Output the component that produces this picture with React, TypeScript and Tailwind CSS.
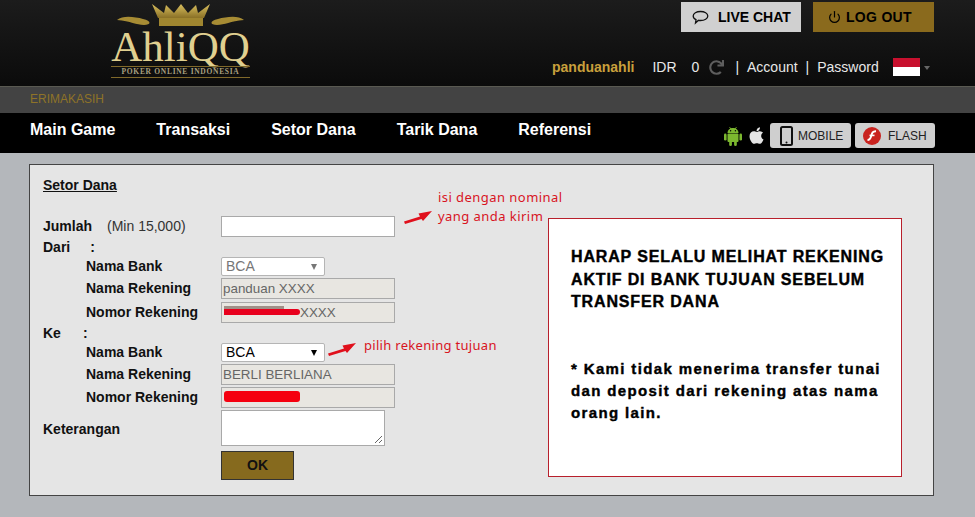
import { Power } from "lucide-react";
import { FaApple, FaRedo } from "react-icons/fa";

const sans = "font-['Liberation_Sans',Arial,sans-serif]";

// Crown and scrolls from the logo
function LogoMark() {
  return (
    <svg width="139" height="25" viewBox="0 0 139 25" className="block">
      <defs>
        <linearGradient id="gold" x1="0" y1="0" x2="0" y2="1">
          <stop offset="0" stopColor="#d9bf5e" />
          <stop offset="1" stopColor="#8a7026" />
        </linearGradient>
      </defs>
      <path
        d="M41 0 L53 9 L55 1 L63 9 L70 0 L77 9 L85 1 L87 9 L99 0 L93 14 L47 14 Z"
        fill="url(#gold)"
      />
      <rect x="48" y="14" width="44" height="8" fill="#a08630" />
      <path d="M6 16 C12 11 24 13 32 15 C41 17 40 21 33 21 C25 21 20 17 6 16 Z" fill="#a78c34" />
      <path d="M133 16 C127 11 115 13 107 15 C98 17 99 21 106 21 C114 21 119 17 133 16 Z" fill="#a78c34" />
    </svg>
  );
}

function Header() {
  return (
    <header className="flex h-[87px] justify-between border-b border-[#5a5a52] bg-gradient-to-b from-[#1c1c1c] to-[#0b0b0b]">
      <div className="ml-[111px] flex w-[139px] flex-col items-center pt-[4px]">
        <LogoMark />
        <div className="h-[36px] font-['Liberation_Serif',serif] text-[43px] leading-[36px] text-[#e0d090]">
          AhliQQ
        </div>
        <div className="mt-[1px] w-full border-y border-[#80692a] text-center font-['Liberation_Serif',serif] text-[7.5px] leading-[10px] font-bold tracking-[0.7px] whitespace-nowrap text-[#a8a080]">
          POKER ONLINE INDONESIA
        </div>
      </div>

      <div className={`flex w-[423px] flex-col ${sans}`}>
        <div className="mt-[2px] flex justify-end gap-[12px] pr-[41px]">
          <button className="flex h-[30px] w-[120px] items-center gap-[9px] bg-[#d0d0d0] pl-[11px] text-[14px] font-bold text-black">
            <svg width="17" height="15" viewBox="0 0 17 15">
              <path
                d="M8.5 1.5 C12.6 1.5 15.8 3.4 15.8 6 C15.8 8.6 12.6 10.5 8.5 10.5 C7.8 10.5 7.1 10.4 6.5 10.3 L3.5 13 L4 9.6 C2.2 8.8 1.2 7.5 1.2 6 C1.2 3.4 4.4 1.5 8.5 1.5 Z"
                fill="none"
                stroke="#111"
                strokeWidth="1.3"
              />
            </svg>
            LIVE CHAT
          </button>
          <button className="flex h-[30px] w-[121px] items-center gap-[5px] bg-[#8a6a1d] pl-[15px] text-[14px] font-bold tracking-[0.3px] text-black">
            <Power className="h-[14px] w-[13px]" strokeWidth={2.2} />
            LOG OUT
          </button>
        </div>
        <div className="mt-[25px] flex h-[20px] items-center text-[14px] text-[#e8e8e8]">
          <span className="font-bold text-[#c9a03c]">panduanahli</span>
          <span className="ml-[18px]">IDR</span>
          <span className="ml-[15px]">0</span>
          <FaRedo className="ml-[10px] h-[15px] w-[15px] text-[#5e5e5e]" />
          <span className="ml-[11px]">|</span>
          <span className="ml-[8px]">Account</span>
          <span className="ml-[8px]">|</span>
          <span className="ml-[8px]">Password</span>
          <div className="ml-[14px] h-[18px] w-[27px] bg-white">
            <div className="h-[9px] bg-[#c8102e]" />
          </div>
          <div className="mt-[2px] ml-[4px] h-0 w-0 border-x-[3.5px] border-t-[4px] border-x-transparent border-t-[#666]" />
        </div>
      </div>
    </header>
  );
}

function AndroidIcon() {
  return (
    <svg width="20" height="20" viewBox="0 0 20 20" fill="#7cb82f">
      <path d="M4.5 7 C4.7 3.8 7 2 10 2 C13 2 15.3 3.8 15.5 7 Z" />
      <path d="M6.5 1 L8 3.2 M13.5 1 L12 3.2" stroke="#7cb82f" strokeWidth="0.8" />
      <circle cx="7.6" cy="4.7" r="0.7" fill="#000" />
      <circle cx="12.4" cy="4.7" r="0.7" fill="#000" />
      <rect x="4.5" y="7.6" width="11" height="8.4" rx="1" />
      <rect x="1" y="7.6" width="2.6" height="7" rx="1.3" />
      <rect x="16.4" y="7.6" width="2.6" height="7" rx="1.3" />
      <rect x="6.2" y="14" width="2.7" height="6" rx="1.3" />
      <rect x="11.1" y="14" width="2.7" height="6" rx="1.3" />
    </svg>
  );
}

function NavBar() {
  const items = ["Main Game", "Transaksi", "Setor Dana", "Tarik Dana", "Referensi"];
  return (
    <nav className={`flex h-[40px] items-start justify-between bg-black pr-[40px] pl-[30px] ${sans}`}>
      <div className="flex gap-[41px] pt-[7px] text-[16px] leading-[20px] font-bold text-white">
        {items.map((item) => (
          <span key={item}>{item}</span>
        ))}
      </div>
      <div className="flex items-center pt-[10px]">
        <AndroidIcon />
        <FaApple className="ml-[5px] h-[19px] w-[17px] text-[#e4e4e4]" />
        <button className="ml-[5px] flex h-[25px] w-[81px] items-center rounded-[3px] bg-[#cfcfcf] pl-[10px] text-[12px] text-[#222]">
          <svg width="13" height="20" viewBox="0 0 13 20" className="mr-[5px]">
            <rect x="1" y="1" width="11" height="18" rx="1.5" fill="none" stroke="#111" strokeWidth="2" />
            <circle cx="6.5" cy="16.5" r="1" fill="#111" />
          </svg>
          MOBILE
        </button>
        <button className="ml-[4px] flex h-[25px] w-[80px] items-center rounded-[3px] bg-[#cfcfcf] pl-[8px] text-[12px] text-[#222]">
          <svg width="18" height="18" viewBox="0 0 18 18" className="mr-[7px]">
            <circle cx="9" cy="9" r="9" fill="#c9231f" />
            <path
              d="M13 4.2 C9.5 4 9 6.2 8.2 9 C7.6 11.3 6.8 13 4.5 13"
              fill="none"
              stroke="#fff"
              strokeWidth="2"
            />
            <path d="M6.5 8.4 L11.5 8.4" stroke="#fff" strokeWidth="1.6" />
          </svg>
          FLASH
        </button>
      </div>
    </nav>
  );
}

function RedArrow() {
  return (
    <svg width="28" height="13" viewBox="0 0 28 13">
      <path d="M0 10.5 L16 5.5 L14.5 2.5 L28 0 L19 10 L17.5 8 L1 13 Z" fill="#e0101c" />
    </svg>
  );
}

function FieldLabel({ children }: { children: React.ReactNode }) {
  return <div className="w-[135px] pl-[43px] whitespace-nowrap">{children}</div>;
}

function ReadOnlyBox({ value }: { value?: string }) {
  return (
    <div className="h-[21px] w-[174px] border border-[#a9a9a9] bg-[#e8e6e1] pl-[1px] text-[13.4px] leading-[19px] font-normal text-[#666]">
      {value}
    </div>
  );
}

function BankSelect({ muted }: { muted?: boolean }) {
  return (
    <div
      className={`flex h-[19px] w-[104px] items-center justify-between rounded-[2px] border border-[#b5b5b5] bg-white pr-[7px] pl-[4px] text-[14px] font-normal ${
        muted ? "text-[#777]" : "text-black"
      }`}
    >
      BCA
      <div
        className={`h-0 w-0 border-x-[3.5px] border-t-[6px] border-x-transparent ${
          muted ? "border-t-[#777]" : "border-t-black"
        }`}
      />
    </div>
  );
}

function DepositForm() {
  return (
    <div className="w-[505px] text-[14px] font-bold text-[#111]">
      <div className="h-[51px] pt-[12px] leading-[16px] underline">Setor Dana</div>

      <div className="flex h-[21px] items-center">
        <div className="flex w-[178px]">
          <span>Jumlah</span>
          <span className="ml-[15px] font-normal text-[#333]">(Min 15,000)</span>
        </div>
        <div className="h-[21px] w-[174px] border border-[#a9a9a9] bg-white" />
      </div>

      <div className="flex h-[20px] items-center">
        Dari<span className="ml-[20px]">:</span>
      </div>
      <div className="flex h-[19px] items-center">
        <FieldLabel>Nama Bank</FieldLabel>
        <div className="ml-[43px]">
          <BankSelect muted />
        </div>
      </div>
      <div className="mt-[2px] flex h-[21px] items-center">
        <FieldLabel>Nama Rekening</FieldLabel>
        <div className="ml-[43px]">
          <ReadOnlyBox value="panduan XXXX" />
        </div>
      </div>
      <div className="mt-[3px] flex h-[21px] items-center">
        <FieldLabel>Nomor Rekening</FieldLabel>
        <div className="relative ml-[43px]">
          <ReadOnlyBox />
          <span className="absolute top-0 left-[79px] text-[13.4px] leading-[21px] font-normal text-[#666]">XXXX</span>
          <div className="absolute top-[4px] left-[3px] h-[3px] w-[60px] bg-[#a09088]" />
          <div className="absolute top-[7px] left-[3px] h-[6px] w-[76px] rounded-r-full bg-[#e8001c]" />
        </div>
      </div>

      <div className="flex h-[20px] items-center">
        Ke<span className="ml-[22px]">:</span>
      </div>
      <div className="flex h-[19px] items-center">
        <FieldLabel>Nama Bank</FieldLabel>
        <div className="ml-[43px]">
          <BankSelect />
        </div>
      </div>
      <div className="mt-[2px] flex h-[21px] items-center">
        <FieldLabel>Nama Rekening</FieldLabel>
        <div className="ml-[43px]">
          <ReadOnlyBox value="BERLI BERLIANA" />
        </div>
      </div>
      <div className="mt-[2px] flex h-[21px] items-center">
        <FieldLabel>Nomor Rekening</FieldLabel>
        <div className="relative ml-[43px]">
          <ReadOnlyBox />
          <div className="absolute top-[4px] left-[3px] h-[11px] w-[76px] rounded-[3px] bg-[#f5000f]" />
        </div>
      </div>

      <div className="mt-[2px] flex h-[36px] items-center">
        <div className="w-[178px] pt-[2px]">Keterangan</div>
        <div className="relative h-[36px] w-[164px] border border-[#a9a9a9] bg-white">
          <svg width="9" height="9" viewBox="0 0 9 9" className="absolute right-[1px] bottom-[1px]">
            <path d="M1 8 L8 1 M5 8 L8 5" stroke="#666" strokeWidth="1" />
          </svg>
        </div>
      </div>

      <button className="mt-[5px] ml-[178px] h-[29px] w-[73px] border border-[#333] bg-[#866a1e] text-[14px] font-bold text-[#111]">
        OK
      </button>
    </div>
  );
}

export default function App() {
  return (
    <div className="min-h-[517px] bg-[#b4b7bb]">
      <Header />
      <div className={`h-[26px] bg-[#434343] pl-[30px] text-[12px] leading-[25px] text-[#8f7328] ${sans}`}>
        ERIMAKASIH
      </div>
      <NavBar />

      <main className="px-[29px] pt-[11px]">
        <section className={`relative flex h-[332px] w-[905px] border border-[#444] bg-[#e5e5e5] pl-[13px] ${sans}`}>
          <DepositForm />

          <aside className="mt-[53px] h-[259px] w-[354px] border border-[#b8202c] bg-white pt-[27px] pl-[22px] font-bold text-black [-webkit-text-stroke:0.4px_#000]">
            <p className="text-[16px] leading-[22.5px] tracking-[0.85px] whitespace-nowrap">
              HARAP SELALU MELIHAT REKENING
              <br />
              AKTIF DI BANK TUJUAN SEBELUM
              <br />
              TRANSFER DANA
            </p>
            <p className="mt-[44px] text-[15px] leading-[22px] tracking-[1.36px] whitespace-nowrap">
              * Kami tidak menerima transfer tunai
              <br />
              dan deposit dari rekening atas nama
              <br />
              orang lain.
            </p>
          </aside>

          {/* hand-written notes sitting on top of the form */}
          <div className="absolute top-[46px] left-[374px]">
            <RedArrow />
          </div>
          <div className="absolute top-[23px] left-[408px] font-['Noto_Sans',sans-serif] text-[13px] leading-[19px] tracking-[0.45px] whitespace-nowrap text-[#d8141f]">
            isi dengan nominal
            <br />
            yang anda kirim
          </div>
          <div className="absolute top-[178px] left-[298px]">
            <RedArrow />
          </div>
          <div className="absolute top-[171px] left-[334px] font-['Noto_Sans',sans-serif] text-[13px] leading-[19px] tracking-[0.3px] whitespace-nowrap text-[#d8141f]">
            pilih rekening tujuan
          </div>
        </section>
      </main>
    </div>
  );
}
